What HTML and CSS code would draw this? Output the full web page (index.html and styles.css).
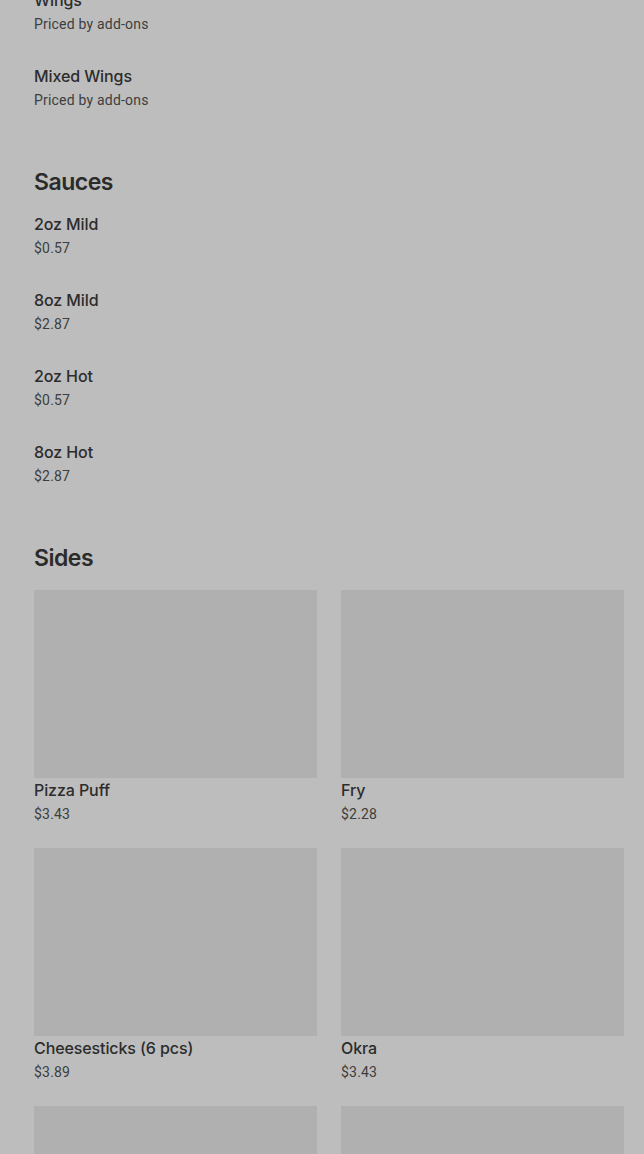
FILE: index.html
```html
<!DOCTYPE html>
<html lang="en">
<head>
  <meta charset="UTF-8">
  <title>Menu</title>
  <link rel="stylesheet" href="styles.css">
</head>
<body>
  <main class="menu">

    <section class="section section-first">
      <div class="item">
        <div class="item-name">Wings</div>
        <div class="item-sub">Priced by add-ons</div>
      </div>
      <div class="item">
        <div class="item-name">Mixed Wings</div>
        <div class="item-sub">Priced by add-ons</div>
      </div>
    </section>

    <section class="section">
      <h2 class="section-title">Sauces</h2>
      <div class="item">
        <div class="item-name">2oz Mild</div>
        <div class="item-sub">$0.57</div>
      </div>
      <div class="item">
        <div class="item-name">8oz Mild</div>
        <div class="item-sub">$2.87</div>
      </div>
      <div class="item">
        <div class="item-name">2oz Hot</div>
        <div class="item-sub">$0.57</div>
      </div>
      <div class="item">
        <div class="item-name">8oz Hot</div>
        <div class="item-sub">$2.87</div>
      </div>
    </section>

    <section class="section">
      <h2 class="section-title">Sides</h2>
      <div class="grid">
        <div class="card">
          <div class="card-img"></div>
          <div class="item-name card-name">Pizza Puff</div>
          <div class="item-sub">$3.43</div>
        </div>
        <div class="card">
          <div class="card-img"></div>
          <div class="item-name card-name">Fry</div>
          <div class="item-sub">$2.28</div>
        </div>
        <div class="card">
          <div class="card-img"></div>
          <div class="item-name card-name">Cheesesticks (6 pcs)</div>
          <div class="item-sub">$3.89</div>
        </div>
        <div class="card">
          <div class="card-img"></div>
          <div class="item-name card-name">Okra</div>
          <div class="item-sub">$3.43</div>
        </div>
        <div class="card">
          <div class="card-img"></div>
        </div>
        <div class="card">
          <div class="card-img"></div>
        </div>
      </div>
    </section>

  </main>
</body>
</html>
```

FILE: styles.css
```css
html, body {
  margin: 0;
  background-color: #bdbdbd;
  overflow: hidden;
}
body {
  font-family: Inter, "Noto Sans", Arial, sans-serif;
  color: #2a2a2a;
}
.menu {
  padding: 0 20px 0 34px;
  margin-top: -10px;
}
.section {
  margin-top: 56px;
}
.section-first {
  margin-top: 0;
}
.section-title {
  margin: 0 0 16px;
  font-size: 23px;
  line-height: 32px;
  font-weight: 600;
  letter-spacing: -0.5px;
  color: #2b2b2b;
}
.item {
  padding-bottom: 32px;
}
.item:last-child {
  padding-bottom: 0;
}
.item-name {
  font-size: 16px;
  line-height: 20px;
  font-weight: 500;
  letter-spacing: -0.1px;
  color: #2c2c2c;
}
.item-sub {
  margin-top: 4px;
  font-family: Roboto, "Liberation Sans", sans-serif;
  font-size: 14px;
  line-height: 20px;
  letter-spacing: 0.2px;
  color: #3e3e3e;
}
.grid {
  display: grid;
  grid-template-columns: 1fr 1fr;
  column-gap: 24px;
  row-gap: 24px;
}
.card-img {
  height: 188px;
  background-color: #b0b0b0;
}
.card-name {
  margin-top: 2px;
}
```
